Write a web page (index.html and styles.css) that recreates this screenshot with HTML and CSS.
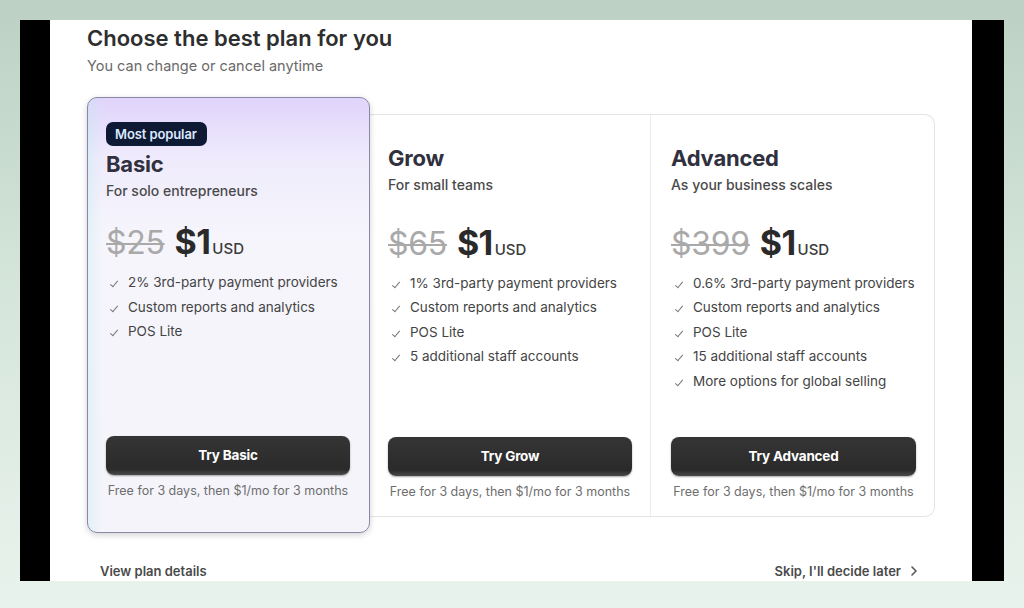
FILE: index.html
```html
<!DOCTYPE html>
<html lang="en">
<head>
    <meta charset="UTF-8">
    <meta name="viewport" content="width=device-width, initial-scale=1.0">
    <title>Choose the best plan for you</title>
    <link rel="stylesheet" href="styles.css">
</head>
<body>

    <div class="frame">
        <div class="panel">
            <!-- heading -->
            <h1 class="title">Choose the best plan for you</h1>
            <p class="subtitle">You can change or cancel anytime</p>

            <!-- plans -->
            <div class="plans">
                <div class="plan plan-basic">
                    <span class="badge">Most popular</span>
                    <h2 class="plan-name">Basic</h2>
                    <p class="plan-desc">For solo entrepreneurs</p>
                    <div class="price price-basic">
                        <span class="old">$25</span>
                        <span class="now">$1</span>
                        <span class="cur">USD</span>
                    </div>
                    <ul class="features">
                        <li>2% 3rd-party payment providers</li>
                        <li>Custom reports and analytics</li>
                        <li>POS Lite</li>
                    </ul>
                    <button class="try">Try Basic</button>
                    <p class="note">Free for 3 days, then $1/mo for 3 months</p>
                </div>

                <div class="others">
                    <div class="plan plan-grow">
                        <h2 class="plan-name">Grow</h2>
                        <p class="plan-desc">For small teams</p>
                        <div class="price">
                            <span class="old">$65</span>
                            <span class="now">$1</span>
                            <span class="cur">USD</span>
                        </div>
                        <ul class="features">
                            <li>1% 3rd-party payment providers</li>
                            <li>Custom reports and analytics</li>
                            <li>POS Lite</li>
                            <li>5 additional staff accounts</li>
                        </ul>
                        <button class="try">Try Grow</button>
                        <p class="note">Free for 3 days, then $1/mo for 3 months</p>
                    </div>

                    <div class="plan plan-advanced">
                        <h2 class="plan-name">Advanced</h2>
                        <p class="plan-desc">As your business scales</p>
                        <div class="price">
                            <span class="old">$399</span>
                            <span class="now">$1</span>
                            <span class="cur">USD</span>
                        </div>
                        <ul class="features">
                            <li>0.6% 3rd-party payment providers</li>
                            <li>Custom reports and analytics</li>
                            <li>POS Lite</li>
                            <li>15 additional staff accounts</li>
                            <li>More options for global selling</li>
                        </ul>
                        <button class="try">Try Advanced</button>
                        <p class="note">Free for 3 days, then $1/mo for 3 months</p>
                    </div>
                </div>
            </div>

            <!-- footer links -->
            <div class="links">
                <a class="link">View plan details</a>
                <a class="link">Skip, I'll decide later
                    <svg class="chev" width="8" height="12" viewBox="0 0 8 12"><path d="M2 2l4 4-4 4" fill="none" stroke="#555" stroke-width="1.6" stroke-linecap="round" stroke-linejoin="round"/></svg>
                </a>
            </div>
        </div>
    </div>

</body>
</html>
```

FILE: styles.css
```css
body {
    margin: 0;
    padding: 20px 20px 0;
    height: 608px;
    box-sizing: border-box;
    background: linear-gradient(180deg, #bcd1c4 0%, #d6e6dc 50%, #e9f3ed 100%);
    font-family: "Inter", "Liberation Sans", sans-serif;
    overflow: hidden;
}

/* black frame round the white panel */
.frame {
    background: #000;
    height: 561px;
    padding: 0 32px 0 30px;
    overflow: hidden;
}

.panel {
    background: #fff;
    height: 561px;
    padding: 4px 0 0 37px;
    box-sizing: border-box;
    overflow: hidden;
}

/* heading */
.title {
    margin: 0;
    font-size: 22px;
    line-height: 28px;
    font-weight: 600;
    color: #2e2e2e;
    letter-spacing: 0;
}
.subtitle {
    margin: 4px 0 0;
    font-size: 14.5px;
    line-height: 20px;
    color: #6a6a6a;
}

/* plans */
.plans {
    display: flex;
    align-items: center;
    width: 848px;
    margin-top: 21px;
}

.plan {
    display: flex;
    flex-direction: column;
    box-sizing: border-box;
}

.plan-basic {
    position: relative;
    z-index: 1;
    width: 283px;
    height: 436px;
    padding: 24px 19px 33px 18px;
    border: 1px solid #8b87a6;
    border-radius: 10px;
    background:
        linear-gradient(90deg, rgba(190, 235, 240, 0.35) 0%, rgba(255, 255, 255, 0) 5%),
        linear-gradient(180deg, #e0d4fb 0%, #efebfc 14%, #f6f5fc 32%, #f4f4fa 100%);
    box-shadow: 0 2px 6px rgba(0, 0, 0, 0.18);
}

.others {
    flex: 1;
    display: flex;
    height: 403px;
    border: 1px solid #e4e4e4;
    border-left: none;
    border-radius: 0 10px 10px 0;
    box-sizing: border-box;
}

.plan-grow {
    width: 281px;
    padding: 29px 18px 16px 18px;
    border-right: 1px solid #ececec;
}
.plan-advanced {
    flex: 1;
    padding: 29px 18px 16px 20px;
}

.badge {
    align-self: flex-start;
    background: #0e1a33;
    color: #dde9ff;
    font-size: 13px;
    font-weight: 600;
    line-height: 24px;
    padding: 0 10px 0 9px;
    border-radius: 7px;
    letter-spacing: -0.1px;
}
.badge + .plan-name {
    margin-top: 4px;
}

.plan-name {
    margin: 0;
    font-size: 22px;
    line-height: 28px;
    font-weight: 700;
    color: #30303e;
    letter-spacing: -0.2px;
}
.plan-desc {
    margin: 3px 0 0;
    font-size: 14px;
    line-height: 20px;
    font-weight: 500;
    color: #4a4a4a;
}

.price {
    display: flex;
    align-items: baseline;
    margin-top: 28px;
    height: 40px;
    line-height: 40px;
}
.price-basic {
    margin-top: 21px;
}
.old {
    font-size: 32px;
    font-weight: 400;
    color: #a9a9a9;
    text-decoration: line-through;
    text-decoration-thickness: 1.5px;
    letter-spacing: -0.3px;
}
.now {
    margin-left: 10px;
    font-size: 34px;
    font-weight: 700;
    color: #2a2a2a;
    letter-spacing: -0.6px;
}
.cur {
    margin-left: 2px;
    font-size: 15px;
    font-weight: 500;
    color: #3a3a3a;
}

.features {
    list-style: none;
    margin: 8px 0 0;
    padding: 0;
}
.features li {
    position: relative;
    padding-left: 22px;
    font-size: 13.5px;
    line-height: 24.5px;
    color: #444;
}
.features li::before {
    content: "";
    position: absolute;
    left: 6px;
    top: 9px;
    width: 3px;
    height: 7px;
    border-right: 1.5px solid #777;
    border-bottom: 1.5px solid #777;
    transform: rotate(40deg);
}

.try {
    margin-top: auto;
    height: 39px;
    border: none;
    border-radius: 8px;
    background: linear-gradient(180deg, #353535 0%, #2a2a2a 85%, #4a4a4a 100%);
    box-shadow: 0 1px 2px rgba(0, 0, 0, 0.35);
    color: #fff;
    font-family: inherit;
    font-size: 13.5px;
    font-weight: 700;
    letter-spacing: -0.2px;
    padding-bottom: 2px;
    cursor: pointer;
}

.note {
    margin: 8px 0 0;
    text-align: center;
    font-size: 12.5px;
    line-height: 16px;
    color: #6e6e6e;
}

/* footer links */
.links {
    display: flex;
    justify-content: space-between;
    width: 818px;
    margin: 29px 0 0 13px;
}
.link {
    display: flex;
    align-items: center;
    gap: 9px;
    font-size: 13px;
    line-height: 18px;
    font-weight: 600;
    color: #4a4a4a;
}
```
